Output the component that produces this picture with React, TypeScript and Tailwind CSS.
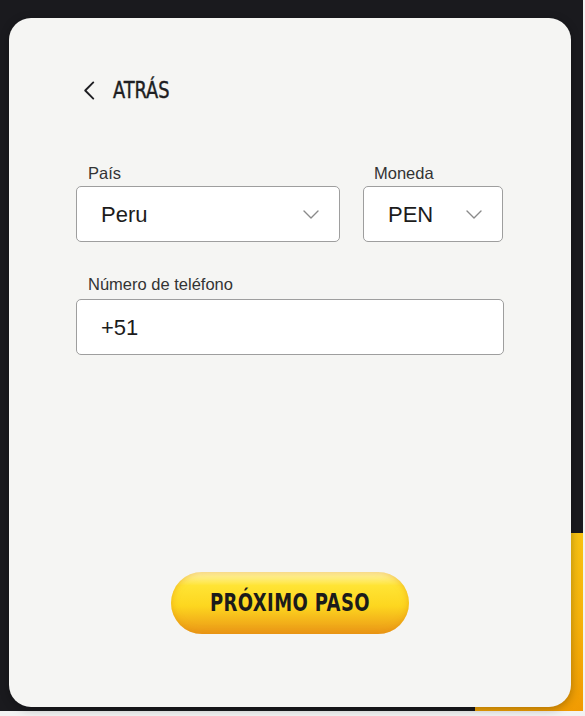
import React from 'react';

const sans = { fontFamily: '"Liberation Sans", Arial, sans-serif' };

function Chevron({ className }: { className?: string }) {
  return (
    <svg viewBox="0 0 16 9" className={className} fill="none" stroke="currentColor" strokeWidth="1.4" strokeLinecap="round" strokeLinejoin="round">
      <path d="M1 1l7 7 7-7" />
    </svg>
  );
}

function SelectBox({ label, value, labelPad }: { label: string; value: string; labelPad: string }) {
  return (
    <div className="flex flex-col">
      <label className={`h-5 text-[16.5px] leading-5 text-[#333333] ${labelPad}`}>{label}</label>
      <div className="mt-[3px] flex h-14 items-center justify-between rounded-[5px] border border-[#9e9e9e] bg-white pl-[24px] pr-[20px]">
        <span className="text-[22px] text-[#1c1c1c]">{value}</span>
        <Chevron className="h-[9px] w-[16px] text-[#8a8a8a]" />
      </div>
    </div>
  );
}

export default function App() {
  return (
    <div className="h-[716px] w-[585px] overflow-hidden bg-[#f2f2f2]" style={sans}>
      <div className="relative h-[711px] w-[583px] bg-[#1a1a1e] pt-[18px] pl-[9px]">
        {/* yellow decoration peeking behind the card */}
        <div className="absolute left-[475px] top-[533px] h-[178px] w-[108px] bg-[linear-gradient(160deg,#f9c916_0%,#f6b40c_55%,#f09a02_100%)]" />

        <div className="relative flex h-[689px] w-[562px] flex-col rounded-[22px] bg-[#f5f5f3] px-[67px] pt-[58px] pb-[73px] shadow-[0_2px_10px_rgba(0,0,0,0.3)]">
          <button className="ml-[7px] flex h-7 items-center gap-[18px] text-[#1e1e22]">
            <svg viewBox="0 0 12 20" className="h-[19px] w-[12px]" fill="none" stroke="currentColor" strokeWidth="2" strokeLinecap="round" strokeLinejoin="round">
              <path d="M10.5 1.5L2 10l8.5 8.5" />
            </svg>
            <span
              className="inline-block origin-left scale-x-[0.86] text-[23px] leading-7 [-webkit-text-stroke:0.4px_#1e1e22]"
              style={{ fontFamily: '"DejaVu Sans Condensed", "DejaVu Sans", sans-serif' }}
            >
              ATRÁS
            </span>
          </button>

          <div className="mt-[59px] grid grid-cols-[264px_140px] gap-x-[23px]">
            <SelectBox label="País" value="Peru" labelPad="pl-3" />
            <SelectBox label="Moneda" value="PEN" labelPad="pl-[11px]" />
          </div>

          <div className="mt-[32px] flex flex-col">
            <label className="h-5 pl-3 text-[16.5px] leading-5 text-[#333333]">Número de teléfono</label>
            <div className="mt-[5px] flex h-14 items-center rounded-[5px] border border-[#9e9e9e] bg-white pl-[24px]">
              <span className="text-[22px] text-[#1c1c1c]">+51</span>
            </div>
          </div>

          <div className="mt-auto flex justify-center">
            <button className="flex h-[62px] w-[238px] items-center justify-center rounded-full bg-[linear-gradient(180deg,#fff6b8_0%,#ffe434_22%,#fdd61f_55%,#f3b21a_80%,#ea9617_100%)] shadow-[inset_0_0_7px_rgba(226,140,10,0.55)]">
              <span
                className="inline-block scale-x-[0.8] text-[25px] font-bold tracking-[0.5px] text-[#1b1b1b]"
                style={{ fontFamily: '"DejaVu Sans Condensed", "DejaVu Sans", sans-serif' }}
              >
                PRÓXIMO PASO
              </span>
            </button>
          </div>
        </div>
      </div>
    </div>
  );
}
